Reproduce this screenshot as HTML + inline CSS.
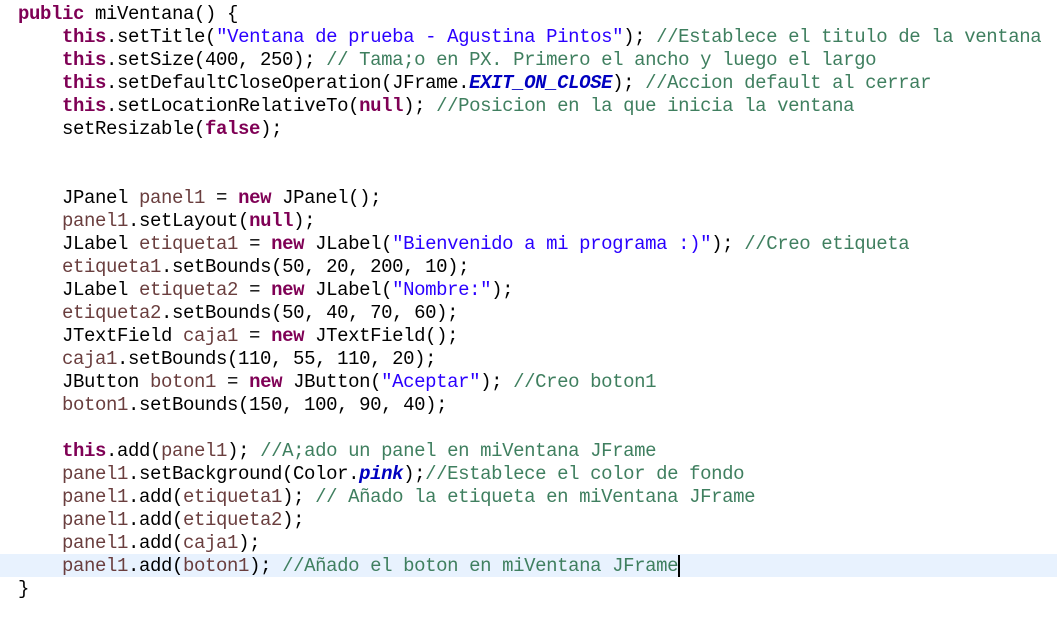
<!DOCTYPE html>
<html><head><meta charset="utf-8"><style>
html,body{margin:0;padding:0;background:#fff;width:1057px;height:642px;overflow:hidden}
.hl{position:absolute;left:0;top:554px;width:1057px;height:23px;background:#e8f2fe}
pre{position:absolute;left:18px;top:3px;margin:0;font-family:"Liberation Mono",monospace;font-size:19px;letter-spacing:-0.4px;line-height:23px;color:#000}
.k{color:#7f0055;font-weight:bold}.s{color:#2a00ff}.c{color:#3f7f5f}.v{color:#6a3e3e}.f{color:#0000c0;font-weight:bold;font-style:italic}
.cur{border-right:2px solid #000}
</style></head><body>
<div class="hl"></div>
<pre><span class="k">public</span> miVentana() {
    <span class="k">this</span>.setTitle(<span class="s">"Ventana de prueba - Agustina Pintos"</span>); <span class="c">//Establece el titulo de la ventana</span>
    <span class="k">this</span>.setSize(400, 250); <span class="c">// Tama;o en PX. Primero el ancho y luego el largo</span>
    <span class="k">this</span>.setDefaultCloseOperation(JFrame.<span class="f">EXIT_ON_CLOSE</span>); <span class="c">//Accion default al cerrar</span>
    <span class="k">this</span>.setLocationRelativeTo(<span class="k">null</span>); <span class="c">//Posicion en la que inicia la ventana</span>
    setResizable(<span class="k">false</span>);


    JPanel <span class="v">panel1</span> = <span class="k">new</span> JPanel();
    <span class="v">panel1</span>.setLayout(<span class="k">null</span>);
    JLabel <span class="v">etiqueta1</span> = <span class="k">new</span> JLabel(<span class="s">"Bienvenido a mi programa :)"</span>); <span class="c">//Creo etiqueta</span>
    <span class="v">etiqueta1</span>.setBounds(50, 20, 200, 10);
    JLabel <span class="v">etiqueta2</span> = <span class="k">new</span> JLabel(<span class="s">"Nombre:"</span>);
    <span class="v">etiqueta2</span>.setBounds(50, 40, 70, 60);
    JTextField <span class="v">caja1</span> = <span class="k">new</span> JTextField();
    <span class="v">caja1</span>.setBounds(110, 55, 110, 20);
    JButton <span class="v">boton1</span> = <span class="k">new</span> JButton(<span class="s">"Aceptar"</span>); <span class="c">//Creo boton1</span>
    <span class="v">boton1</span>.setBounds(150, 100, 90, 40);

    <span class="k">this</span>.add(<span class="v">panel1</span>); <span class="c">//A;ado un panel en miVentana JFrame</span>
    <span class="v">panel1</span>.setBackground(Color.<span class="f">pink</span>);<span class="c">//Establece el color de fondo</span>
    <span class="v">panel1</span>.add(<span class="v">etiqueta1</span>); <span class="c">// Añado la etiqueta en miVentana JFrame</span>
    <span class="v">panel1</span>.add(<span class="v">etiqueta2</span>);
    <span class="v">panel1</span>.add(<span class="v">caja1</span>);
    <span class="v">panel1</span>.add(<span class="v">boton1</span>); <span class="c cur">//Añado el boton en miVentana JFrame</span>
}</pre>
</body></html>
